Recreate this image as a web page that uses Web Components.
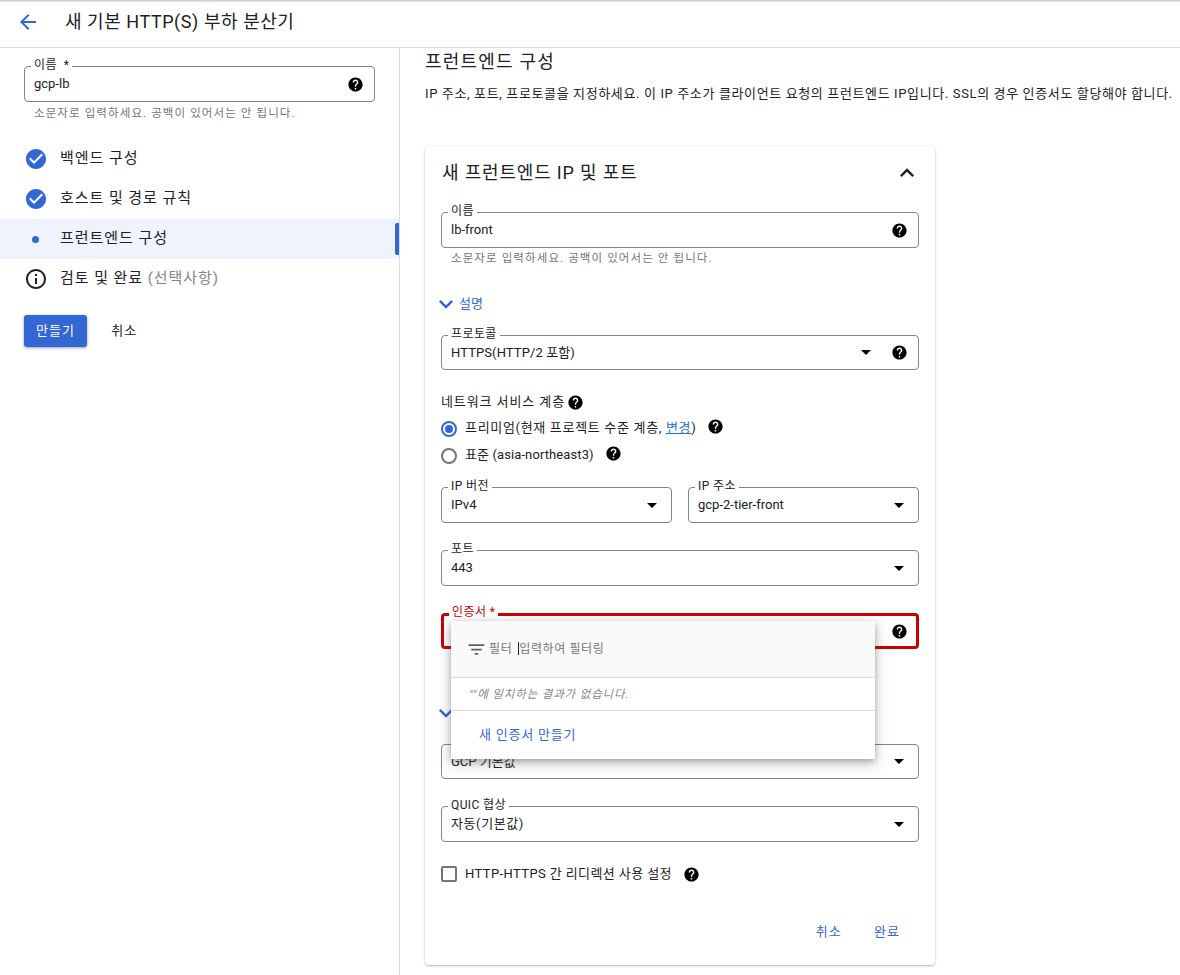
<!DOCTYPE html>
<html lang="ko">
<head>
<meta charset="utf-8">
<title>새 기본 HTTP(S) 부하 분산기</title>
<style>
  html, body { margin: 0; height: 975px; overflow: hidden; background: #fff; }
  body { font: 13px/18px Roboto, "Noto Sans CJK KR", sans-serif; color: #202124; }
</style>
</head>
<body>
<lb-page></lb-page>
<script>
const P = {
  help: 'M12 2C6.48 2 2 6.48 2 12s4.48 10 10 10 10-4.48 10-10S17.52 2 12 2zm1 17h-2v-2h2v2zm2.07-7.75l-.9.92C13.45 12.9 13 13.5 13 15h-2v-.5c0-1.1.45-2.1 1.17-2.83l1.24-1.26c.37-.36.59-.86.59-1.41 0-1.1-.9-2-2-2s-2 .9-2 2H8c0-2.21 1.79-4 4-4s4 1.79 4 4c0 .88-.36 1.68-.93 2.25z',
  check: 'M12 2C6.48 2 2 6.48 2 12s4.48 10 10 10 10-4.48 10-10S17.52 2 12 2zm-2 15l-5-5 1.41-1.41L10 14.17l7.59-7.59L19 8l-9 9z',
  info: 'M11 7h2v2h-2zm0 4h2v6h-2zm1-9C6.48 2 2 6.48 2 12s4.48 10 10 10 10-4.48 10-10S17.52 2 12 2zm0 18c-4.41 0-8-3.59-8-8s3.59-8 8-8 8 3.59 8 8-3.59 8-8 8z',
  back: 'M20 11H7.83l5.59-5.59L12 4l-8 8 8 8 1.41-1.41L7.83 13H20v-2z',
  less: 'M12 8l-6 6 1.41 1.41L12 10.83l4.59 4.58L18 14z',
  more: 'M16.59 8.59L12 13.17 7.41 8.59 6 10l6 6 6-6z',
  filter: 'M10 18h4v-2h-4v2zM3 6v2h18V6H3zm3 7h12v-2H6v2z'
};
const FONT = 'Roboto, "Noto Sans CJK KR", sans-serif';

function def(name, html) {
  customElements.define(name, class extends HTMLElement {
    connectedCallback() {
      if (this.shadowRoot) return;
      const root = this.attachShadow({ mode: 'open' });
      root.innerHTML = typeof html === 'function' ? html(this) : html;
    }
  });
}

def('lb-icon', el => {
  const s = el.getAttribute('size') || 24;
  return `<style>:host{display:inline-flex;flex:none;line-height:0;color:${el.getAttribute('color') || 'inherit'}}</style>
  <svg width="${s}" height="${s}" viewBox="0 0 24 24" fill="currentColor"><path d="${P[el.getAttribute('name')]}"/></svg>`;
});

def('lb-help', `<style>:host{display:inline-flex;flex:none;line-height:0}</style>
  <svg width="17" height="17" viewBox="0 0 24 24" fill="#000"><path d="${P.help}"/></svg>`);

def('lb-topbar', `<style>
  :host{display:flex;align-items:center;box-sizing:border-box;height:48px;padding-bottom:4px;border-bottom:1px solid #dadce0;background:linear-gradient(#b5b5b5 0,#e4e4e4 1px,#fff 3px,#fff 6px);font-size:18px;color:#202124}
  lb-icon{margin-left:16px}
  .t{margin-left:25px;letter-spacing:.55px;white-space:nowrap}
  </style><lb-icon name="back" color="#3367d6"></lb-icon><span class="t"><slot></slot></span>`);

def('lb-field', el => {
  const kind = el.getAttribute('kind') || 'text';
  const err = el.hasAttribute('error');
  const arrow = kind === 'select';
  return `<style>
  :host{display:block;position:relative}
  .box{box-sizing:border-box;height:${el.getAttribute('h') || 36}px;border:${err ? '3px solid #c90000' : '1px solid #80868b'};border-radius:4px;display:flex;align-items:center;padding:0 ${err ? 8 : 10}px 0 ${err ? 7 : 9}px;font-size:13px;color:#202124}
  .v{flex:1;white-space:nowrap;overflow:hidden;letter-spacing:var(--ls,0)}
  .lab{position:absolute;left:${err ? 8 : 7}px;top:-8px;background:#fff;padding:0 3px;font-size:12px;line-height:15px;letter-spacing:.4px;color:${err ? '#c90000' : '#202124'};white-space:nowrap}
  .arrow{width:0;height:0;border:5px solid transparent;border-top:5px solid #000;border-bottom:0;margin-right:${el.hasAttribute('help') ? 20 : 4}px}
  </style>
  <div class="box"><span class="v"><slot></slot></span>${arrow ? '<span class="arrow"></span>' : ''}${el.hasAttribute('help') ? '<lb-help></lb-help>' : ''}</div>
  ${el.getAttribute('label') ? `<span class="lab">${el.getAttribute('label')}</span>` : ''}`;
});

def('lb-hint', `<style>:host{display:block;padding-left:10px;font-size:11.5px;line-height:16px;letter-spacing:1.1px;color:#70757a;white-space:nowrap}</style><slot></slot>`);

def('lb-step', el => {
  const k = el.getAttribute('state');
  const ic = k === 'done' ? '<lb-icon name="check" color="#3367d6"></lb-icon>'
    : k === 'info' ? '<lb-icon name="info" color="#202124"></lb-icon>'
    : '<span class="dot"></span>';
  return `<style>
  :host{display:flex;align-items:center;height:40px;padding-left:24px;font-size:15px;color:#202124;position:relative;${k === 'current' ? 'background:#eff4fc;' : ''}letter-spacing:.95px;white-space:nowrap}
  .i{width:24px;height:24px;display:flex;align-items:center;justify-content:center;margin-right:12px}
  .dot{width:7px;height:7px;border-radius:50%;background:#3367d6;margin-left:-1px}
  .txt{margin-top:-2px}
  .bar{position:absolute;right:0;top:4px;bottom:4px;width:4px;border-radius:2px 0 0 2px;background:#3367d6}
  </style><span class="i">${ic}</span><span class="txt"><slot></slot></span>${k === 'current' ? '<span class="bar"></span>' : ''}`;
});

def('lb-button', el => {
  const k = el.getAttribute('kind');
  return `<style>
  :host{display:inline-flex;align-items:center;justify-content:center;height:32px;box-sizing:border-box;font-size:13px;letter-spacing:1.1px;border-radius:3px;white-space:nowrap;padding:0 12px;
  ${k === 'primary' ? 'background:#3367d6;color:#fff;box-shadow:0 1px 3px rgba(60,64,67,.5);'
    : k === 'link' ? 'color:#3367d6;' : 'color:#202124;'}}
  </style><slot></slot>`;
});

def('lb-sidebar', `<style>
  :host{display:block;box-sizing:border-box;width:400px;border-right:1px solid #dadce0;height:927px;flex:none;overflow:hidden}
  .name{margin:18px 24px 0 24px}
  lb-hint{margin:3px 24px 0 24px}
  .steps{margin-top:18px}
  .acts{display:flex;align-items:center;gap:12px;padding-left:24px;margin-top:16px}
  .opt{color:#80868b}
  </style>
  <lb-field class="name" label="이름 &nbsp;*" help>gcp-lb</lb-field>
  <lb-hint>소문자로 입력하세요. 공백이 있어서는 안 됩니다.</lb-hint>
  <div class="steps">
    <lb-step state="done">백엔드 구성</lb-step>
    <lb-step state="done">호스트 및 경로 규칙</lb-step>
    <lb-step state="current">프런트엔드 구성</lb-step>
    <lb-step state="info">검토 및 완료 <span class="opt">(선택사항)</span></lb-step>
  </div>
  <div class="acts"><lb-button kind="primary">만들기</lb-button><lb-button>취소</lb-button></div>`);

def('lb-expander', `<style>
  :host{display:flex;align-items:center;color:#3367d6;font-size:13px;height:20px;letter-spacing:0}
  lb-icon{margin-left:-9px;margin-right:-1px}
  </style><lb-icon name="more" size="28"></lb-icon><slot></slot>`);

def('lb-radio', el => {
  const on = el.hasAttribute('checked');
  return `<style>
  :host{display:flex;align-items:center;height:18px;font-size:13px;letter-spacing:var(--ls,.1px);color:#202124;white-space:nowrap}
  .r{box-sizing:border-box;width:16px;height:16px;border-radius:50%;border:2px solid ${on ? '#3367d6' : '#757575'};display:flex;align-items:center;justify-content:center;margin-right:8px;flex:none;margin-top:1px}
  .r i{width:8px;height:8px;border-radius:50%;background:${on ? '#3367d6' : 'transparent'}}
  lb-help{margin-left:${el.getAttribute('gap') || 10}px;margin-top:-3px}
  </style><span class="r"><i></i></span><span><slot></slot></span><lb-help></lb-help>`;
});

def('lb-check', `<style>
  :host{display:flex;align-items:center;height:18px;font-size:13px;letter-spacing:.4px;color:#202124;white-space:nowrap}
  .c{box-sizing:border-box;width:16px;height:16px;border-radius:2px;border:2px solid #757575;margin-right:8px;flex:none}
  lb-help{margin-left:11px}
  </style><span class="c"></span><span><slot></slot></span><lb-help></lb-help>`);

def('lb-menu', `<style>
  :host{position:absolute;left:26px;top:475px;width:424px;height:138px;background:#fff;box-shadow:0 4px 12px rgba(60,64,67,.35),0 2px 5px rgba(60,64,67,.25);display:block;z-index:5;font-size:12px;letter-spacing:.6px;white-space:nowrap}
  .f{height:56px;background:#fafafa;border-bottom:1px solid #dadce0;display:flex;align-items:center;padding-left:15px;color:#70757a}
  .f lb-icon{margin-right:2px}
  .caret{display:inline-block;width:1px;height:13px;background:#202124;margin:0 0 0 6px;vertical-align:-2px}
  .m{height:32px;border-bottom:1px solid #dadce0;display:flex;align-items:center;padding-left:18px;font-style:italic;color:#80868b;font-size:11.5px;letter-spacing:.85px}
  .l{height:48px;display:flex;align-items:center;padding-left:28px;color:#3367d6;font-size:13px;letter-spacing:.8px}
  </style>
  <div class="f"><lb-icon name="filter" size="21" color="#5f6368"></lb-icon><span>필터<span class="caret"></span>입력하여 필터링</span></div>
  <div class="m">""에 일치하는 결과가 없습니다.</div>
  <div class="l">새 인증서 만들기</div>`);

def('lb-card', `<style>
  :host{display:block;position:relative;box-sizing:border-box;width:510px;height:819px;border-radius:4px;background:#fff;box-shadow:0 1px 2px rgba(60,64,67,.35),0 0 3px rgba(60,64,67,.1);padding:14px 16px 0}
  .h{display:flex;align-items:center;justify-content:space-between;height:26px;font-size:18px;letter-spacing:.82px;color:#202124;padding-left:1px}
  .h lb-icon{margin-right:-2px}
  .f1{margin-top:26px}
  lb-hint{margin-top:2px}
  lb-expander{margin-top:28px}
  .proto{margin-top:21px;--ls:.1px}
  .net{display:flex;align-items:center;margin-top:22px;height:20px;font-size:13px;letter-spacing:.9px;white-space:nowrap}
  .net lb-help{margin-left:2px}
  .r1{margin-top:7px;--ls:.68px}
  .r2{margin-top:9px}
  a{color:#1a73e8;text-decoration:underline}
  .two{display:grid;grid-template-columns:231px 231px;gap:16px;margin-top:23px}
  .port{margin-top:27px}
  .cert{margin-top:27px}
  .adv{margin-top:54px}
  .ssl{margin-top:21px}
  .quic{margin-top:27px;--ls:.6px}
  lb-check{margin-top:23px}
  .foot{display:flex;justify-content:flex-end;gap:8px;margin-top:33px;padding-right:7px}
  </style>
  <div class="h"><span>새 프런트엔드 IP 및 포트</span><lb-icon name="less" size="28"></lb-icon></div>
  <lb-field class="f1" label="이름" help>lb-front</lb-field>
  <lb-hint>소문자로 입력하세요. 공백이 있어서는 안 됩니다.</lb-hint>
  <lb-expander>설명</lb-expander>
  <lb-field class="proto" label="프로토콜" kind="select" help h="35">HTTPS(HTTP/2 포함)</lb-field>
  <div class="net">네트워크 서비스 계층<lb-help></lb-help></div>
  <lb-radio class="r1" checked gap="11">프리미엄(현재 프로젝트 수준 계층, <a>변경</a>)</lb-radio>
  <lb-radio class="r2" gap="11">표준 (asia-northeast3)</lb-radio>
  <div class="two">
    <lb-field label="IP 버전" kind="select">IPv4</lb-field>
    <lb-field label="IP 주소" kind="select">gcp-2-tier-front</lb-field>
  </div>
  <lb-field class="port" label="포트" kind="select">443</lb-field>
  <lb-field class="cert" label="인증서 *" error help></lb-field>
  <lb-expander class="adv"></lb-expander>
  <lb-field class="ssl" kind="select" h="35">GCP 기본값</lb-field>
  <lb-field class="quic" label="QUIC 협상" kind="select">자동(기본값)</lb-field>
  <lb-check>HTTP-HTTPS 간 리디렉션 사용 설정</lb-check>
  <div class="foot"><lb-button kind="link">취소</lb-button><lb-button kind="link">완료</lb-button></div>
  <lb-menu></lb-menu>`);

def('lb-main', `<style>
  :host{display:block;flex:1;min-width:0;padding-left:25px;overflow:hidden;height:927px;box-sizing:border-box}
  h2{margin:0;padding-top:2px;font-size:18px;line-height:24px;font-weight:400;letter-spacing:1.2px;color:#202124}
  p{margin:11px 0 0;font-size:13px;line-height:18px;letter-spacing:.63px;white-space:nowrap;color:#202124}
  lb-card{margin-top:43px}
  </style>
  <h2>프런트엔드 구성</h2>
  <p>IP 주소, 포트, 프로토콜을 지정하세요. 이 IP 주소가 클라이언트 요청의 프런트엔드 IP입니다. SSL의 경우 인증서도 할당해야 합니다.</p>
  <lb-card></lb-card>`);

def('lb-page', `<style>
  :host{display:block;width:1180px;height:975px;overflow:hidden;font-family:${FONT}}
  .row{display:flex}
  </style>
  <lb-topbar>새 기본 HTTP(S) 부하 분산기</lb-topbar>
  <div class="row"><lb-sidebar></lb-sidebar><lb-main></lb-main></div>`);
</script>
</body>
</html>
